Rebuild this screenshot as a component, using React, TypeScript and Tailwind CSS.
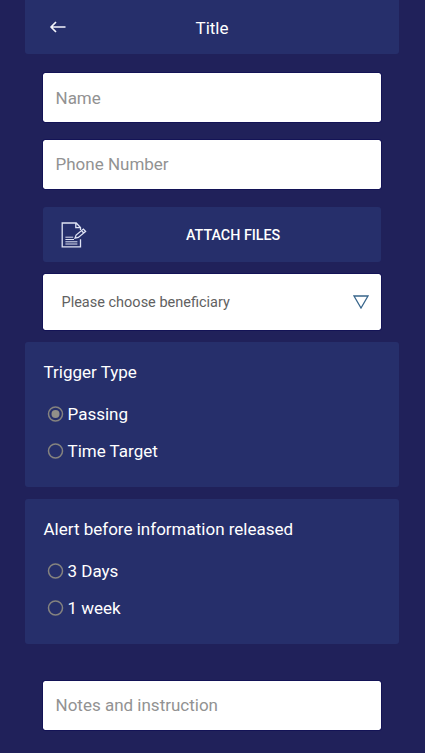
import React from "react";

function Field({ label, className }: { label: string; className: string }) {
  return (
    <input
      placeholder={label}
      aria-label={label}
      className={`block w-[338px] shrink-0 rounded-[2px] bg-white pl-[12.5px] text-[17px] font-normal text-[#8a8a8a] outline outline-1 outline-[#131356] placeholder:text-[#929292] ${className}`}
    />
  );
}

function Radio({ label, checked, className }: { label: string; checked?: boolean; className: string }) {
  return (
    <div className={`flex h-5 items-center whitespace-nowrap text-[17px] leading-5 ${className}`}>
      <svg width="17" height="16" viewBox="0 0 17 16" fill="none" className="mr-[3.5px] mb-px shrink-0">
        <circle cx="8.5" cy="8" r="7" stroke="#85837f" strokeWidth="1.5" />
        {checked && <circle cx="8.5" cy="8" r="4" fill="#918f89" />}
      </svg>
      {label}
    </div>
  );
}

export default function App() {
  return (
    <main className="flex h-[753px] w-[425px] flex-col items-center overflow-hidden bg-[#20215a] pr-px font-['Roboto',sans-serif] text-white">
      <header className="flex h-[54px] w-[374px] shrink-0 items-center rounded-b-[3px] bg-[#262f6b]">
        <svg width="16" height="12" viewBox="0 0 16 12" fill="none" stroke="#f3f4fb" strokeWidth="1.7" className="ml-[25px]">
          <path d="M6 1 1 6l5 5M1 6h14.5" strokeLinejoin="round" />
        </svg>
        <h1 className="ml-[129.5px] pt-[2px] text-[17px] leading-5 font-normal">Title</h1>
      </header>

      <Field label="Name" className="mt-[19px] h-[49px]" />
      <Field label="Phone Number" className="mt-[18px] h-[49px] pb-px" />

      <button className="mt-[18px] flex h-[55px] w-[338px] shrink-0 items-center rounded-[3px] bg-[#262f6b]">
        <svg width="26" height="26" viewBox="0 0 26 26" fill="none" stroke="#dfe3f4" strokeWidth="1.3" className="ml-[18px]">
          <path d="M19.5 8V5.6L15.2 1H1.2v23.8h18.3v-7.6M14.8 1v4.6h4.6" />
          <path d="m14 16.2 1.1-3.1 7.3-6 2.2 2.4-7.3 6zM20.6 8.6l2.1 2.4" />
          <path d="M4.4 15.2h7.8M4.4 17.5h8.6M4.4 19.8h12M4.4 22h12" strokeWidth="1" />
        </svg>
        <span className="ml-[99px] text-[14.3px] leading-5 font-medium">ATTACH FILES</span>
      </button>

      <button className="mt-[12px] flex h-[56px] w-[338px] shrink-0 items-center justify-between rounded-[2px] bg-white pr-[12px] pl-[18.5px] text-[14.5px] text-[#616161] outline outline-1 outline-[#131356]">
        <span className="pt-[2px]">Please choose beneficiary</span>
        <svg width="16" height="14" viewBox="0 0 16 14" fill="none" stroke="#38658b" strokeWidth="1.3">
          <path d="M1 1h14L8 13z" />
        </svg>
      </button>

      <section className="mt-[12px] h-[145px] w-[374px] shrink-0 rounded-[3px] bg-[#262f6b] pl-[18.5px]">
        <h2 className="pt-[20px] text-[17px] leading-5 font-normal">Trigger Type</h2>
        <Radio label="Passing" checked className="mt-[22px] ml-[3.5px]" />
        <Radio label="Time Target" className="mt-[17px] ml-[3.5px]" />
      </section>

      <section className="mt-[12px] h-[145px] w-[374px] shrink-0 rounded-[3px] bg-[#262f6b] pl-[18.5px]">
        <h2 className="pt-[20px] text-[17px] leading-5 font-normal">Alert before information released</h2>
        <Radio label="3 Days" className="mt-[22px] ml-[3.5px]" />
        <Radio label="1 week" className="mt-[17px] ml-[3.5px]" />
      </section>

      <Field label="Notes and instruction" className="mt-[37px] h-[49px] pb-px" />
    </main>
  );
}
